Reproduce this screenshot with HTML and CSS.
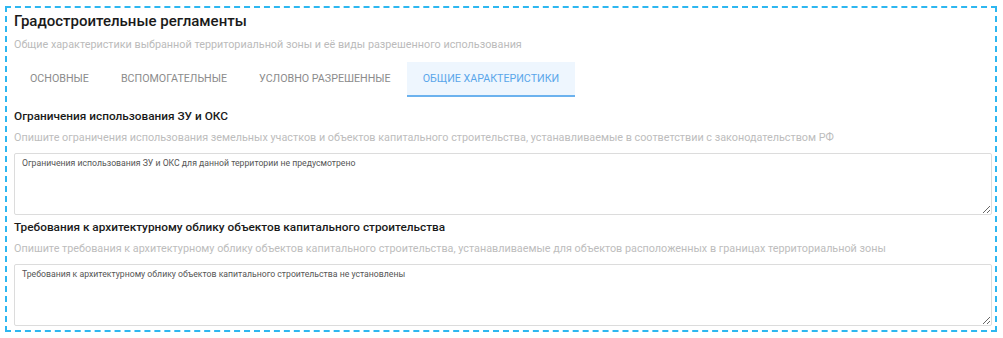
FILE: index.html
```html
<!DOCTYPE html>
<html lang="ru">

<head>
    <meta charset="UTF-8" />
    <meta name="viewport" content="width=device-width, initial-scale=1.0" />
    <title>Градостроительные регламенты</title>
    <link rel="stylesheet" href="styles.css">
</head>

<body>
    <div class="panel">
        <h1 class="panel-title">Градостроительные регламенты</h1>
        <div class="panel-subtitle">Общие характеристики выбранной территориальной зоны и её виды разрешенного использования</div>

        <div class="tabs">
            <div class="tab">Основные</div>
            <div class="tab">Вспомогательные</div>
            <div class="tab">Условно разрешенные</div>
            <div class="tab active">Общие характеристики</div>
        </div>

        <div class="field">
            <div class="field-title">Ограничения использования ЗУ и ОКС</div>
            <div class="field-hint">Опишите ограничения использования земельных участков и объектов капитального строительства, устанавливаемые в соответствии с законодательством РФ</div>
            <textarea class="field-input">Ограничения использования ЗУ и ОКС для данной территории не предусмотрено</textarea>
        </div>

        <div class="field">
            <div class="field-title">Требования к архитектурному облику объектов капитального строительства</div>
            <div class="field-hint">Опишите требования к архитектурному облику объектов капитального строительства, устанавливаемые для объектов расположенных в границах территориальной зоны</div>
            <textarea class="field-input">Требования к архитектурному облику объектов капитального строительства не установлены</textarea>
        </div>
    </div>
</body>

</html>
```

FILE: styles.css
```css
body {
    margin: 0;
    padding: 0;
    background: #fff;
    font-family: Roboto, "Liberation Sans", sans-serif;
}

.panel {
    margin: 6px 6px 0 5px;
    border: 2px dashed #2db7f0;
    padding: 3px 3px 4px 7px;
    display: flex;
    flex-direction: column;
}

.panel-title {
    margin: 0;
    font-size: 15px;
    line-height: 20px;
    font-weight: 500;
    color: #1a1a1a;
}

.panel-subtitle {
    margin-top: 6px;
    font-size: 10.8px;
    line-height: 16px;
    color: #bbbbbb;
}

.tabs {
    margin-top: 9px;
    display: flex;
}

.tab {
    padding: 0 16px;
    height: 33px;
    line-height: 33px;
    font-size: 10.7px;
    text-transform: uppercase;
    color: #8c8c8c;
    border-bottom: 2px solid transparent;
}

.tab.active {
    background: #eef6fe;
    color: #5aa6ea;
    border-bottom-color: #6cb2ee;
}

.field {
    display: flex;
    flex-direction: column;
    margin-top: 10px;
}

.field + .field {
    margin-top: 3px;
}

.field-title {
    font-size: 11.8px;
    line-height: 18px;
    font-weight: 500;
    color: #1a1a1a;
}

.field-hint {
    margin-top: 5px;
    font-size: 10.8px;
    line-height: 16px;
    color: #bdbdbd;
}

.field-input {
    margin-top: 7px;
    height: 62px;
    box-sizing: border-box;
    border: 1px solid #dcdcdc;
    border-radius: 2px;
    padding: 3px 7px;
    font-family: Roboto, "Liberation Sans", sans-serif;
    font-size: 8.7px;
    line-height: 13px;
    color: #555;
    resize: vertical;
    outline: none;
}
```
